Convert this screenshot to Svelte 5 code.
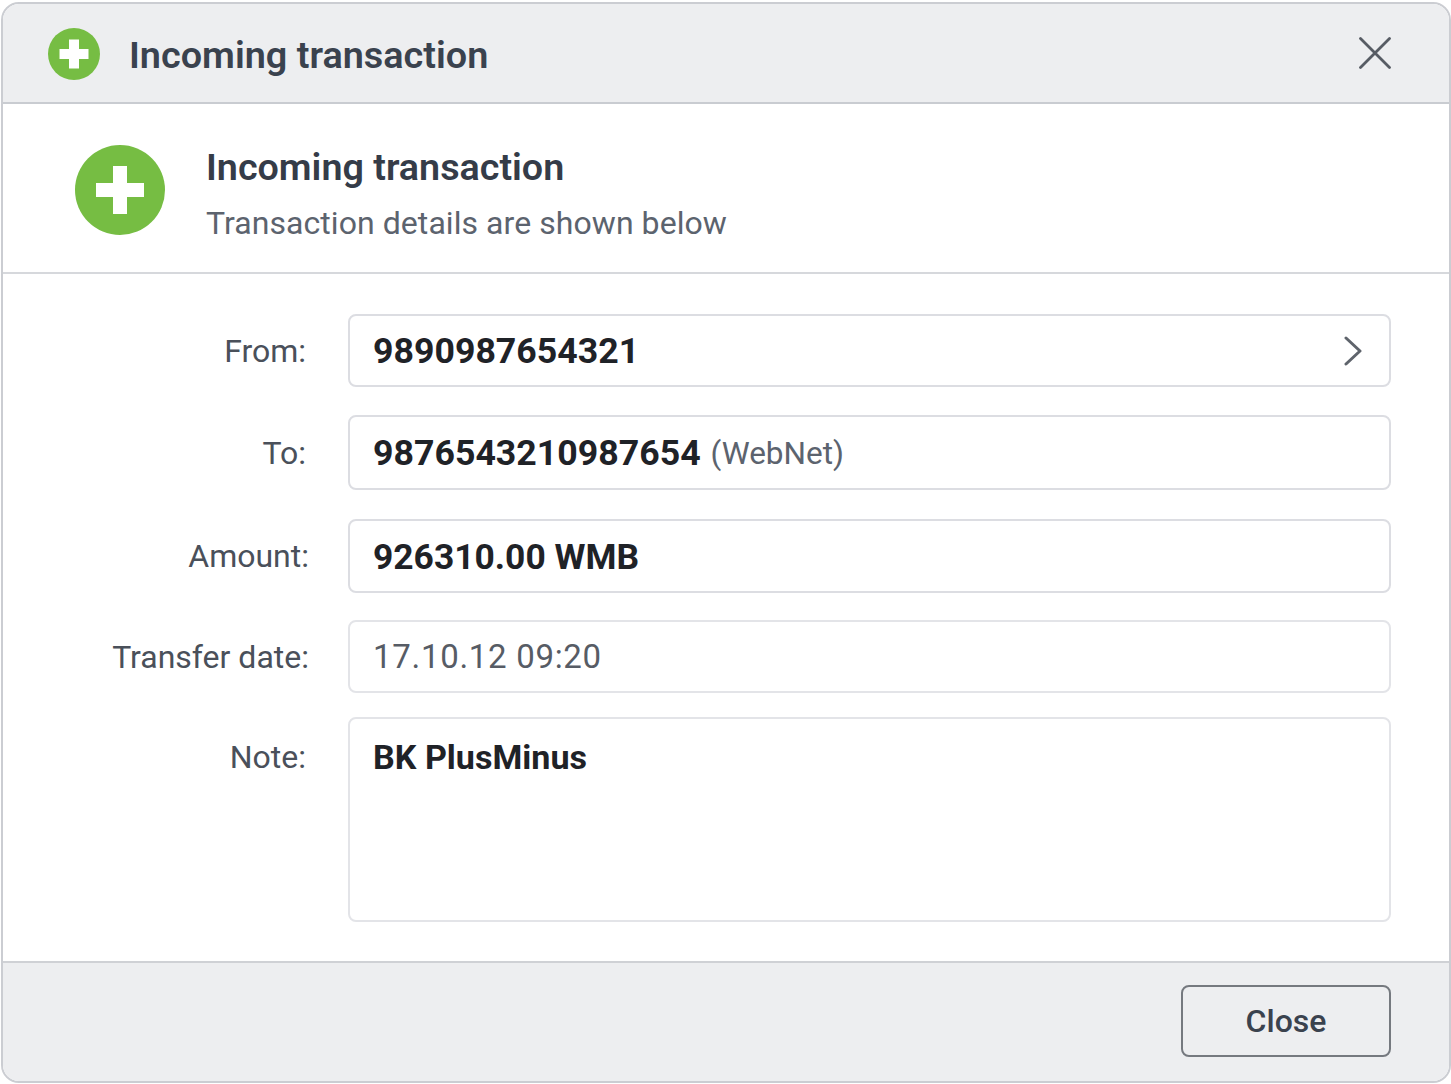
<script>
  const rows = [
    { label: 'From:', value: '9890987654321', kind: 'from', chevron: true },
    { label: 'To:', value: '9876543210987654', extra: '(WebNet)', kind: 'to' },
    { label: 'Amount:', value: '926310.00 WMB', kind: 'amount' },
    { label: 'Transfer date:', value: '17.10.12 09:20', kind: 'date', plain: true },
    { label: 'Note:', value: 'BK PlusMinus', kind: 'note' }
  ];
</script>

<div class="page">
  <div class="dialog">
    <header class="titlebar">
      <svg class="icon-small" viewBox="0 0 52 52" aria-hidden="true">
        <circle cx="26" cy="26" r="26" fill="#76bd43" />
        <path d="M21 11.5h10V21h9.5v10H31v9.5H21V31h-9.5V21H21z" fill="#fff" />
      </svg>
      <h1>Incoming transaction</h1>
      <svg class="close-x" viewBox="0 0 32 32" aria-hidden="true">
        <path d="M1.5 1.5l29 29M30.5 1.5l-29 29" fill="none" stroke="#575c64" stroke-width="2.8" stroke-linecap="round" />
      </svg>
    </header>

    <section class="intro">
      <svg class="icon-large" viewBox="0 0 90 90" aria-hidden="true">
        <circle cx="45" cy="45" r="45" fill="#76bd43" />
        <path d="M38 21h14v17h17v14H52v17H38V52H21V38h17z" fill="#fff" />
      </svg>
      <div class="intro-text">
        <h2>Incoming transaction</h2>
        <p>Transaction details are shown below</p>
      </div>
    </section>

    <section class="form">
      {#each rows as row}
        <div class="row {row.kind}">
          <div class="label">{row.label}</div>
          <div class="field">
            <span class:plain={row.plain} class="value">{row.value}</span>
            {#if row.extra}<span class="extra">{row.extra}</span>{/if}
            {#if row.chevron}
              <svg class="chevron" viewBox="0 0 18 30" aria-hidden="true">
                <path d="M2 2l14 13L2 28" fill="none" stroke="#5f646c" stroke-width="3" stroke-linecap="round" stroke-linejoin="round" />
              </svg>
            {/if}
          </div>
        </div>
      {/each}
    </section>

    <footer class="footer">
      <button type="button">Close</button>
    </footer>
  </div>
</div>

<style>
  :global(body) {
    margin: 0;
    background: #fff;
  }
  .page {
    width: 1451px;
    height: 1084px;
    padding: 2px 0 0 1px;
    box-sizing: border-box;
    font-family: Roboto, "Liberation Sans", sans-serif;
  }
  .dialog {
    width: 1450px;
    height: 1081px;
    box-sizing: border-box;
    border: 2px solid #cbcdd2;
    border-radius: 18px;
    background: #fff;
    overflow: hidden;
    display: flex;
    flex-direction: column;
  }
  .titlebar {
    height: 100px;
    flex: none;
    box-sizing: border-box;
    background: #edeef0;
    border-bottom: 2px solid #c9ccd1;
    display: flex;
    align-items: center;
    padding: 0 58px 0 45px;
  }
  .icon-small {
    width: 52px;
    height: 52px;
    flex: none;
    margin-top: 1px;
  }
  h1 {
    margin: 5px 0 0 29px;
    flex: 1;
    font-size: 37.8px;
    font-weight: 600;
    color: #3a424e;
    line-height: 1;
  }
  .close-x {
    width: 32px;
    height: 32px;
    flex: none;
  }
  .intro {
    height: 170px;
    flex: none;
    box-sizing: border-box;
    border-bottom: 2px solid #d6d8dc;
    display: flex;
    align-items: center;
    padding: 0 0 0 72px;
  }
  .icon-large {
    width: 90px;
    height: 90px;
    flex: none;
    margin-top: 4px;
  }
  .intro-text {
    margin-left: 41px;
    margin-top: 13px;
  }
  h2 {
    margin: 0;
    font-size: 37.7px;
    font-weight: 600;
    color: #353c48;
    line-height: 42px;
  }
  .intro-text p {
    margin: 15px 0 0;
    font-size: 32px;
    letter-spacing: 0.06px;
    line-height: 40px;
    color: #5c636e;
  }
  .form {
    flex: 1;
    padding: 40px 58px 0 0;
    display: flex;
    flex-direction: column;
  }
  .row {
    display: flex;
    align-items: center;
    height: 73px;
  }
  .row.to { margin-top: 28px; height: 75px; }
  .row.amount { margin-top: 29px; height: 74px; }
  .row.date { margin-top: 27px; }
  .row.note { margin-top: 24px; height: 205px; align-items: flex-start; }
  .label {
    width: 303px;
    flex: none;
    text-align: right;
    font-size: 32px;
    color: #4a505a;
  }
  .amount .label, .date .label { width: 306px; }
  .note .label { padding-top: 21px; }
  .field {
    margin-left: auto;
    width: 1043px;
    height: 100%;
    box-sizing: border-box;
    border: 2px solid #dcdde2;
    border-radius: 8px;
    display: flex;
    align-items: center;
    padding: 1px 24px 0 23px;
    position: relative;
  }
  .date .field { padding-top: 0; }
  .note .field {
    align-items: flex-start;
    padding-top: 18px;
    border-color: #e3e4e8;
  }
  .date .field { border-color: #e3e4e8; }
  .value {
    font-size: 35.7px;
    font-weight: 700;
    color: #1f2227;
  }
  .amount .value { font-size: 35.4px; }
  .value.plain {
    font-weight: 400;
    font-size: 33px;
    letter-spacing: 0.7px;
    color: #575c65;
  }
  .note .value { font-size: 34.1px; font-weight: 700; }
  .extra {
    margin-left: 10px;
    font-size: 31.5px;
    color: #5c636e;
  }
  .chevron {
    width: 18px;
    height: 30px;
    margin-left: auto;
    margin-right: 3px;
  }
  .footer {
    height: 120px;
    flex: none;
    box-sizing: border-box;
    background: #edeef0;
    border-top: 2px solid #cfd1d5;
    display: flex;
    justify-content: flex-end;
    align-items: flex-start;
    padding: 22px 58px 0 0;
  }
  button {
    width: 210px;
    height: 72px;
    box-sizing: border-box;
    background: transparent;
    border: 2px solid #75797f;
    border-radius: 8px;
    font: 500 32px Roboto, "Liberation Sans", sans-serif;
    color: #3a424e;
  }
</style>
